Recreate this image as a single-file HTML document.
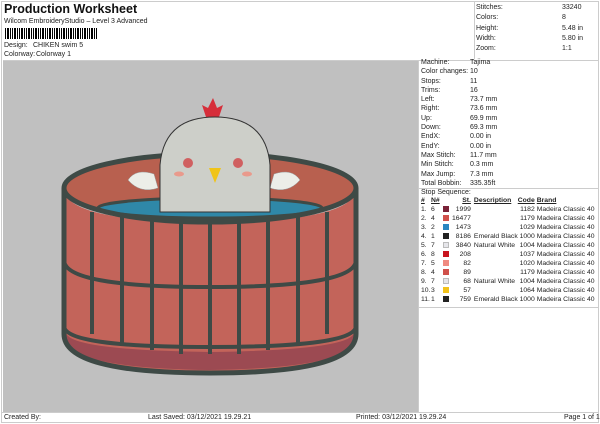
<!DOCTYPE html>
<html><head><style>
*{margin:0;padding:0;box-sizing:border-box}
body{width:600px;height:424px;background:#fff;font-family:"Liberation Sans",sans-serif;color:#222;position:relative;overflow:hidden;font-size:7px}
.a{position:absolute;white-space:nowrap}
.frame{position:absolute;left:1px;top:1px;width:598px;height:422px;border:1px solid #ccc}
table{border-collapse:collapse}
td{padding:0;font-size:6.8px;height:9px;white-space:nowrap}
.sw{display:inline-block;width:6px;height:6px;vertical-align:-1px}
</style></head><body>
<div class="frame"></div>
<div class="a" style="left:4px;top:2px;font-size:12.5px;font-weight:bold;color:#111">Production Worksheet</div>
<div class="a" style="left:4px;top:18px">Wilcom EmbroideryStudio – Level 3 Advanced</div>
<div class="a" style="left:5px;top:28px;width:92px;height:11px;background:repeating-linear-gradient(90deg,#000 0 1px,#fff 1px 2px,#000 2px 4px,#fff 4px 5px,#000 5px 6px,#fff 6px 7px)"></div>
<div class="a" style="left:4px;top:42px">Design:</div><div class="a" style="left:33px;top:42px">CHIKEN swim 5</div>
<div class="a" style="left:4px;top:51px">Colorway:</div><div class="a" style="left:36px;top:51px">Colorway 1</div>
<div class="a" style="left:474px;top:1px;width:1px;height:58px;background:#ccc"></div>
<div class="a" style="left:476px;top:3px;line-height:10.3px">Stitches:<br>Colors:<br>Height:<br>Width:<br>Zoom:</div>
<div class="a" style="left:562px;top:3px;line-height:10.3px">33240<br>8<br>5.48 in<br>5.80 in<br>1:1</div>
<div class="a" style="left:3px;top:60px;width:595px;height:1px;background:#ccc"></div>
<div class="a" style="left:3px;top:61px;width:415px;height:351px;background:#c0c0c0"></div>
<svg class="a" style="left:3px;top:61px" width="415" height="351" viewBox="3 61 415 351">
<ellipse cx="210" cy="188" rx="145" ry="33" fill="#b8604f"/>
<path d="M64 188a146 34 0 0 1 292 0" stroke="#3e4a46" stroke-width="5" fill="none"/>
<ellipse cx="210" cy="208" rx="112" ry="10" fill="#2f88a8" stroke="#3e4a46" stroke-width="3"/>
<path d="M300 180q-8-12-26-6l-4 14q18 6 30-8z" fill="#eceee8" stroke="#999" stroke-width=".5"/>
<path d="M128 180q8-12 26-6l4 14q-18 6-30-8z" fill="#eceee8" stroke="#999" stroke-width=".5"/>
<path d="M206 117l-4-12l6 3l5-10l4 10l6-3l-4 12z" fill="#d62e3a"/>
<path d="M160 212v-47q4-48 55-48q51 0 55 48v47z" fill="#cdcfc9" stroke="#333" stroke-width="1"/>
<circle cx="188" cy="163" r="5" fill="#d06060"/><circle cx="238" cy="163" r="5" fill="#d06060"/>
<ellipse cx="179" cy="174" rx="5" ry="2.5" fill="#e99a8c"/><ellipse cx="247" cy="174" rx="5" ry="2.5" fill="#e99a8c"/>
<path d="M209 168h12l-6 15z" fill="#f0c419"/>
<path d="M64 188v146q0 39 146 39q146 0 146-39v-146q0 34-146 34q-146 0-146-34z" fill="#c3645a"/>
<path d="M66 332q0 18 144 20q144-2 144-20v6q0 30-144 32q-144-2-144-32z" fill="#9c4a52"/>
<g stroke="#3e4a46" stroke-width="4" fill="none">
<path d="M92 212v122M122 217v127M152 220v130M181 222v132M210 222v132M239 222v132M268 220v130M298 217v127M327 212v122"/>
<path d="M64 188v146M356 188v146" stroke-width="5"/>
<path d="M64 260q0 27 146 27q146 0 146-27"/>
<path d="M64 326q0 21 146 21q146 0 146-21"/>
<path d="M64 334q0 39 146 39q146 0 146-39" stroke-width="5"/>
<path d="M64 188a146 34 0 0 0 292 0" stroke-width="5"/>
</g>
</svg>
<div class="a" style="left:418px;top:61px;width:1px;height:351px;background:#ccc"></div>
<div class="a" style="left:421px;top:58px;line-height:9.3px">Machine:<br>Color changes:<br>Stops:<br>Trims:<br>Left:<br>Right:<br>Up:<br>Down:<br>EndX:<br>EndY:<br>Max Stitch:<br>Min Stitch:<br>Max Jump:<br>Total Bobbin:</div>
<div class="a" style="left:470px;top:58px;line-height:9.3px">Tajima<br>10<br>11<br>16<br>73.7 mm<br>73.6 mm<br>69.9 mm<br>69.3 mm<br>0.00 in<br>0.00 in<br>11.7 mm<br>0.3 mm<br>7.3 mm<br>335.35ft</div>
<div class="a" style="left:419px;top:188px;width:179px;height:1px;background:#ccc"></div>
<div class="a" style="left:421px;top:189px">Stop Sequence:</div>
<table class="a" style="left:421px;top:196px">
<tr style="font-weight:bold;text-decoration:underline"><td style="width:10px">#</td><td style="width:12px">N#</td><td style="width:9px"></td><td style="width:16px;text-align:right">St.</td><td style="width:45px;padding-left:3px">Description</td><td style="width:17px;text-align:right">Code</td><td style="padding-left:2px">Brand</td></tr>
<tr><td>1.</td><td>6</td><td><i class="sw" style="background:#7a2238"></i></td><td style="text-align:right">1999</td><td></td><td style="text-align:right">1182</td><td style="padding-left:2px">Madeira Classic 40</td></tr>
<tr><td>2.</td><td>4</td><td><i class="sw" style="background:#d0504a"></i></td><td style="text-align:right">16477</td><td></td><td style="text-align:right">1179</td><td style="padding-left:2px">Madeira Classic 40</td></tr>
<tr><td>3.</td><td>2</td><td><i class="sw" style="background:#2a86c0"></i></td><td style="text-align:right">1473</td><td></td><td style="text-align:right">1029</td><td style="padding-left:2px">Madeira Classic 40</td></tr>
<tr><td>4.</td><td>1</td><td><i class="sw" style="background:#222"></i></td><td style="text-align:right">8186</td><td style="padding-left:3px">Emerald Black</td><td style="text-align:right">1000</td><td style="padding-left:2px">Madeira Classic 40</td></tr>
<tr><td>5.</td><td>7</td><td><i class="sw" style="background:#e6e6ea;border:1px solid #bbb"></i></td><td style="text-align:right">3840</td><td style="padding-left:3px">Natural White</td><td style="text-align:right">1004</td><td style="padding-left:2px">Madeira Classic 40</td></tr>
<tr><td>6.</td><td>8</td><td><i class="sw" style="background:#c8141e"></i></td><td style="text-align:right">208</td><td></td><td style="text-align:right">1037</td><td style="padding-left:2px">Madeira Classic 40</td></tr>
<tr><td>7.</td><td>5</td><td><i class="sw" style="background:#f08a80"></i></td><td style="text-align:right">82</td><td></td><td style="text-align:right">1020</td><td style="padding-left:2px">Madeira Classic 40</td></tr>
<tr><td>8.</td><td>4</td><td><i class="sw" style="background:#d0504a"></i></td><td style="text-align:right">89</td><td></td><td style="text-align:right">1179</td><td style="padding-left:2px">Madeira Classic 40</td></tr>
<tr><td>9.</td><td>7</td><td><i class="sw" style="background:#e6e6ea;border:1px solid #bbb"></i></td><td style="text-align:right">68</td><td style="padding-left:3px">Natural White</td><td style="text-align:right">1004</td><td style="padding-left:2px">Madeira Classic 40</td></tr>
<tr><td>10.</td><td>3</td><td><i class="sw" style="background:#f2c21a"></i></td><td style="text-align:right">57</td><td></td><td style="text-align:right">1064</td><td style="padding-left:2px">Madeira Classic 40</td></tr>
<tr><td>11.</td><td>1</td><td><i class="sw" style="background:#222"></i></td><td style="text-align:right">759</td><td style="padding-left:3px">Emerald Black</td><td style="text-align:right">1000</td><td style="padding-left:2px">Madeira Classic 40</td></tr>
</table>
<div class="a" style="left:419px;top:307px;width:179px;height:1px;background:#ccc"></div>
<div class="a" style="left:1px;top:412px;width:598px;height:1px;background:#ccc"></div>
<div class="a" style="left:4px;top:414px">Created By:</div>
<div class="a" style="left:148px;top:414px">Last Saved: 03/12/2021 19.29.21</div>
<div class="a" style="left:356px;top:414px">Printed: 03/12/2021 19.29.24</div>
<div class="a" style="left:564px;top:414px">Page 1 of 1</div>
</body></html>
